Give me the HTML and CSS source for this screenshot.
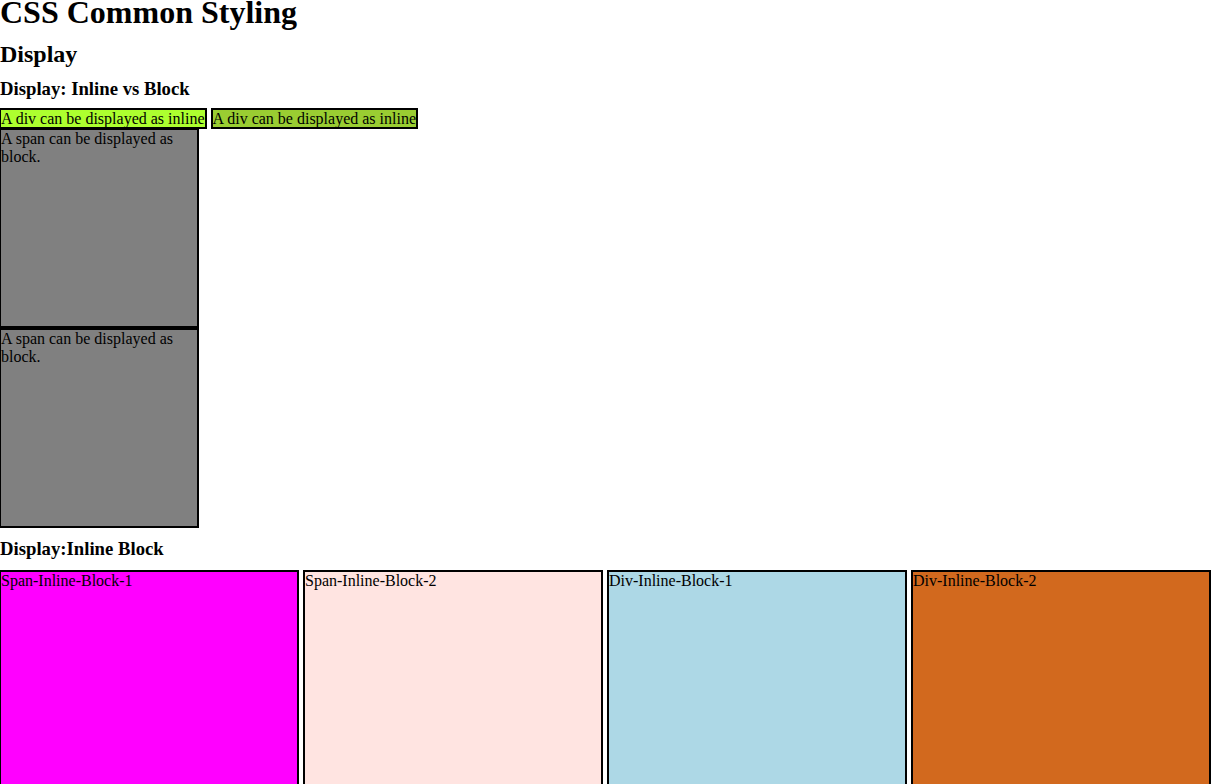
FILE: index.html
```html
<!DOCTYPE html>
<html>
<head>
<meta charset="utf-8">
<title>CSS Common Styling</title>
<link rel="stylesheet" href="styles.css">
</head>
<body>
<h1 class="title">CSS Common Styling</h1>
<h2 class="section">Display</h2>
<h3 class="sub">Display: Inline vs Block</h3>
<div class="inline-div first">A div can be displayed as inline</div>
<div class="inline-div second">A div can be displayed as inline</div>
<span class="block-span">A span can be displayed as block.</span>
<span class="block-span">A span can be displayed as block.</span>
<h3 class="sub sub-ib">Display:Inline Block</h3>
<div class="ib-row"><span class="ib magenta">Span-Inline-Block-1</span> <span class="ib rose">Span-Inline-Block-2</span> <div class="ib blue">Div-Inline-Block-1</div> <div class="ib choc">Div-Inline-Block-2</div></div>
</body>
</html>
```
FILE: styles.css
```css
html, body {
  overflow: hidden;
}
body {
  margin: 0 0 0 -1px;
  font-family: "Liberation Serif", "Times New Roman", serif;
  font-size: 16px;
  color: #000;
  background: #fff;
}
.title {
  font-size: 32px;
  font-weight: bold;
  margin: -6px 0 0 1px;
}
.section {
  font-size: 24px;
  font-weight: bold;
  margin: 10px 0 0 1px;
}
.sub {
  font-size: 18.72px;
  font-weight: bold;
  margin: 10px 0 10px 1px;
}
.sub-ib {
  margin-top: 10px;
  margin-bottom: 10px;
}
.inline-div {
  display: inline;
  border: 2px solid #000;
}
.first {
  background: #adff2f;
}
.second {
  background: #9acd32;
}
.block-span {
  display: block;
  width: 196px;
  height: 196px;
  border: 2px solid #000;
  background: #808080;
}
.ib-row {
  white-space: nowrap;
}
.ib {
  display: inline-block;
  vertical-align: baseline;
  width: 296px;
  height: 296px;
  border: 2px solid #000;
  white-space: normal;
}
.magenta { background: #ff00ff; }
.rose { background: #ffe4e1; }
.blue { background: #add8e6; }
.choc { background: #d2691e; }
```
